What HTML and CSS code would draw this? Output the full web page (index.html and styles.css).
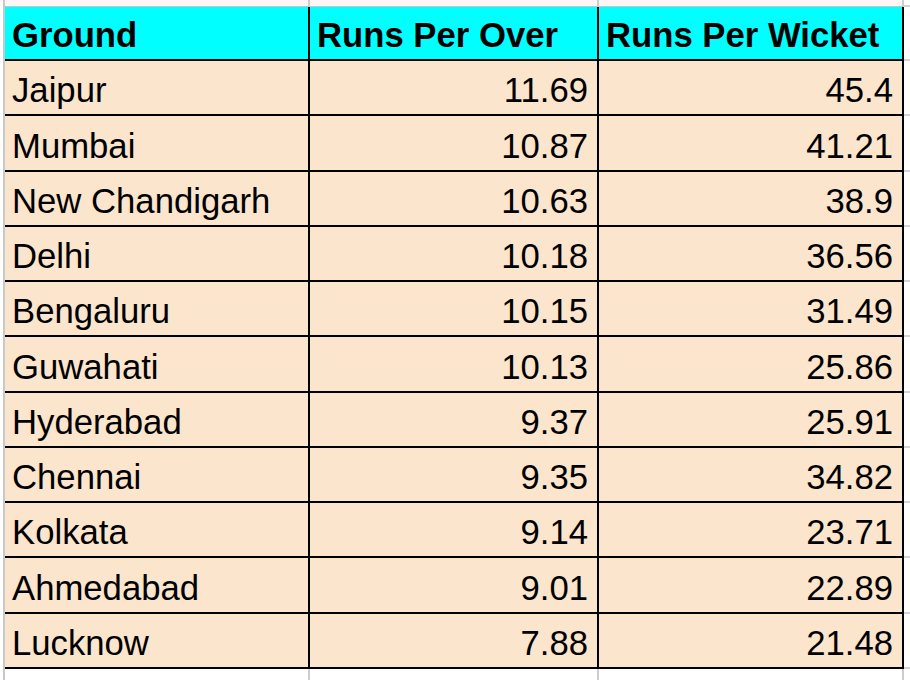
FILE: index.html
```html
<!DOCTYPE html>
<html lang="en">
<head>
<meta charset="utf-8">
<title>Runs per ground</title>
<link rel="stylesheet" href="styles.css">
</head>
<body>
<table class="sheet">
  <colgroup>
    <col class="c-ground">
    <col class="c-rpo">
    <col class="c-rpw">
    <col class="c-pad">
  </colgroup>
  <tr class="prev"><td></td><td></td><td></td><td class="pad"></td></tr>
  <tr class="head"><th>Ground</th><th>Runs Per Over</th><th>Runs Per Wicket</th><td class="pad"></td></tr>
  <tr class="row"><td>Jaipur</td><td class="num">11.69</td><td class="num">45.4</td><td class="pad"></td></tr>
  <tr class="row"><td>Mumbai</td><td class="num">10.87</td><td class="num">41.21</td><td class="pad"></td></tr>
  <tr class="row"><td>New Chandigarh</td><td class="num">10.63</td><td class="num">38.9</td><td class="pad"></td></tr>
  <tr class="row"><td>Delhi</td><td class="num">10.18</td><td class="num">36.56</td><td class="pad"></td></tr>
  <tr class="row"><td>Bengaluru</td><td class="num">10.15</td><td class="num">31.49</td><td class="pad"></td></tr>
  <tr class="row"><td>Guwahati</td><td class="num">10.13</td><td class="num">25.86</td><td class="pad"></td></tr>
  <tr class="row"><td>Hyderabad</td><td class="num">9.37</td><td class="num">25.91</td><td class="pad"></td></tr>
  <tr class="row"><td>Chennai</td><td class="num">9.35</td><td class="num">34.82</td><td class="pad"></td></tr>
  <tr class="row"><td>Kolkata</td><td class="num">9.14</td><td class="num">23.71</td><td class="pad"></td></tr>
  <tr class="row"><td>Ahmedabad</td><td class="num">9.01</td><td class="num">22.89</td><td class="pad"></td></tr>
  <tr class="row"><td>Lucknow</td><td class="num">7.88</td><td class="num">21.48</td><td class="pad"></td></tr>
  <tr class="next"><td></td><td></td><td></td><td class="pad"></td></tr>
</table>
</body>
</html>
```
FILE: styles.css
```css
html, body {
  margin: 0;
  padding: 0;
  background: #ffffff;
  overflow: hidden;
}

.sheet {
  margin-left: 3px;
  width: 907px;
  table-layout: fixed;
  border-collapse: separate;
  border-spacing: 0;
  border-left: 2px solid #c9c9c9;
  font-family: "Liberation Sans", Arial, sans-serif;
  font-size: 34.7px;
  color: #000;
}

.c-ground { width: 305px; }
.c-rpo { width: 289px; }
.c-rpw { width: 305px; }
.c-pad { width: 6px; }

.sheet td,
.sheet th {
  box-sizing: border-box;
  padding: 0 9px 5px 7px;
  line-height: 38px;
  vertical-align: bottom;
  white-space: nowrap;
  overflow: hidden;
  text-align: left;
}

.prev { height: 7px; }
.prev td {
  padding: 0;
  line-height: 0;
  background: #fdf6f4;
  border-right: 2px solid #cdcdcd;
  border-bottom: 1px solid #c6c6c6;
}
.prev td.pad { border-right: 0; }

.head { height: 54px; }
.head th {
  font-weight: bold;
  background: #00ffff;
  border-right: 2px solid #000;
  border-bottom: 2px solid #000;
}

.row { height: 55.27px; }
.row td {
  background: #fce5cd;
  border-right: 2px solid #000;
  border-bottom: 2px solid #000;
}

.sheet .num { text-align: right; }

.sheet td.pad {
  padding: 0;
  background: #ffffff;
  border-right: 0;
  border-bottom: 2px solid #d4d4d4;
}

.next { height: 12px; }
.next td {
  padding: 0;
  line-height: 0;
  background: #ffffff;
  border-right: 2px solid #cdcdcd;
}
.next td.pad { border: 0; }
```
